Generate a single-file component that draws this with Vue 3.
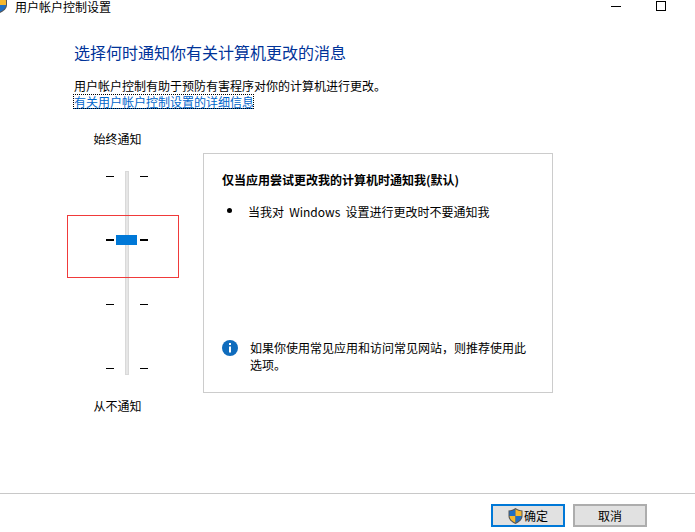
<script setup>
const tickRows = [
  { id: 1, active: false },
  { id: 2, active: true },
  { id: 3, active: false },
  { id: 4, active: false }
]
</script>

<template>
  <div class="window">
    <header class="titlebar">
      <svg class="title-shield" width="16" height="16" viewBox="0 0 16 16">
        <path d="M8 0 C10 1.5 12.5 2.2 15 2.4 V8 C15 11.5 12 14.2 8 16 C4 14.2 1 11.5 1 8 V2.4 C3.5 2.2 6 1.5 8 0Z" fill="#555" />
        <path d="M8 1.2 V8 H2 V3.2 C4 3 6.2 2.4 8 1.2Z" fill="#1f6fc4" />
        <path d="M8 1.2 C9.8 2.4 12 3 14 3.2 V8 H8Z" fill="#f5b82e" />
        <path d="M2 8 H8 V14.8 C4.6 13.2 2 11 2 8Z" fill="#f5b82e" />
        <path d="M8 8 H14 C14 11 11.4 13.2 8 14.8Z" fill="#1f6fc4" />
      </svg>
      <span class="title-text">用户帐户控制设置</span>
      <span class="win-min"></span>
      <span class="win-max"></span>
    </header>

    <main class="content">
      <h1 class="heading">选择何时通知你有关计算机更改的消息</h1>
      <p class="desc">用户帐户控制有助于预防有害程序对你的计算机进行更改。</p>
      <a class="link">有关用户帐户控制设置的详细信息</a>

      <div class="settings">
        <section class="slider">
          <div class="slider-label">始终通知</div>
          <div class="scale">
            <div class="track"></div>
            <div v-for="row in tickRows" :key="row.id" class="tick-row" :class="{ active: row.active }">
              <span class="tick"></span>
              <span v-if="row.active" class="thumb"></span>
              <span class="tick"></span>
            </div>
            <div class="marker"></div>
          </div>
          <div class="slider-label bottom">从不通知</div>
        </section>

        <section class="panel">
          <h2 class="panel-title">仅当应用尝试更改我的计算机时通知我(默认)</h2>
          <div class="bullet-row">
            <span class="dot"></span>
            <span class="bullet-text">当我对 Windows 设置进行更改时不要通知我</span>
          </div>
          <div class="note">
            <svg class="info" width="16" height="16" viewBox="0 0 16 16">
              <circle cx="8" cy="8" r="8" fill="#0f6cbd" />
              <rect x="7" y="3" width="2" height="2" fill="#fff" />
              <rect x="7" y="6.5" width="2" height="6" fill="#fff" />
            </svg>
            <p>如果你使用常见应用和访问常见网站，则推荐使用此选项。</p>
          </div>
        </section>
      </div>
    </main>

    <footer class="footer">
      <button class="btn primary">
        <svg width="15" height="16" viewBox="0 0 15 16">
          <path d="M7.5 0 C9.5 1.5 12 2.2 14.5 2.4 V8 C14.5 11.5 11.5 14.2 7.5 16 C3.5 14.2 .5 11.5 .5 8 V2.4 C3 2.2 5.5 1.5 7.5 0Z" fill="#555" />
          <path d="M7.5 1.2 V8 H1.5 V3.2 C3.5 3 5.7 2.4 7.5 1.2Z" fill="#1f6fc4" />
          <path d="M7.5 1.2 C9.3 2.4 11.5 3 13.5 3.2 V8 H7.5Z" fill="#f5b82e" />
          <path d="M1.5 8 H7.5 V14.8 C4.1 13.2 1.5 11 1.5 8Z" fill="#f5b82e" />
          <path d="M7.5 8 H13.5 C13.5 11 10.9 13.2 7.5 14.8Z" fill="#1f6fc4" />
        </svg>
        <span>确定</span>
      </button>
      <button class="btn">取消</button>
    </footer>
  </div>
</template>

<style>
html, body { margin: 0; background: #fff; }
</style>

<style scoped>
.window {
  position: relative;
  width: 695px;
  height: 532px;
  overflow: hidden;
  display: flex;
  flex-direction: column;
  background: #fff;
  color: #000;
  font: 12px/17px "Noto Sans CJK SC", "Liberation Sans", sans-serif;
}
.titlebar {
  height: 13px;
  display: flex;
  align-items: flex-start;
  flex: none;
}
.title-shield { margin: -3px 0 0 -8px; flex: none; }
.title-text { margin: -2px 0 0 7px; }
.win-min {
  width: 10px;
  height: 1px;
  margin: 6px 0 0 auto;
  background: #000;
}
.win-max {
  box-sizing: border-box;
  width: 10px;
  height: 10px;
  margin: 1px 29px 0 35px;
  border: 1px solid #000;
}
.content {
  flex: 1;
  padding-left: 74px;
}
.heading {
  margin: 28px 0 0;
  font-size: 16px;
  line-height: 22px;
  font-weight: 400;
  color: #003399;
}
.desc {
  margin: 14px 0 0;
  line-height: 17px;
}
.link {
  display: block;
  width: fit-content;
  margin: 0 0 0 -1px;
  padding: 0 0 0 1px;
  height: 15px;
  line-height: 15px;
  color: #0066cc;
  text-decoration: underline;
  outline: 1px dotted #000;
  outline-offset: -1px;
}
.settings {
  display: flex;
  margin-top: 44px;
  margin-left: -7px;
}
.slider {
  width: 112px;
  flex: none;
  margin-top: -23px;
}
.slider-label {
  text-align: center;
  margin-left: -11px;
}
.slider-label.bottom { margin-top: 22px; }
.scale {
  position: relative;
  margin-top: 24px;
  height: 204px;
  display: flex;
  flex-direction: column;
  gap: 63px;
  padding-top: 5px;
  box-sizing: border-box;
}
.track {
  position: absolute;
  left: 58px;
  top: 0;
  bottom: 0;
  width: 2px;
  background: #e6e6e6;
  border: 1px solid #d9d9d9;
}
.tick-row {
  position: relative;
  height: 1px;
  display: flex;
  justify-content: center;
  gap: 26px;
  padding-left: 8px;
}
.tick {
  width: 8px;
  height: 1px;
  background: #000;
}
.tick-row.active { gap: 2px; height: 2px; margin-top: -1px; align-items: center; }
.tick-row.active .tick { height: 2px; }
.thumb {
  width: 21px;
  height: 10px;
  margin-right: 1px;
  background: #0078d7;
  flex: none;
}
.marker {
  position: absolute;
  left: 0;
  top: 44px;
  box-sizing: border-box;
  width: 112px;
  height: 63px;
  border: 1px solid #f03a3a;
}
.panel {
  box-sizing: border-box;
  width: 350px;
  height: 240px;
  margin-left: 24px;
  border: 1px solid #cccccc;
  padding: 17px 18px 0;
  display: flex;
  flex-direction: column;
}
.panel-title {
  margin: 0;
  font-size: 12px;
  line-height: 17px;
  font-weight: 700;
}
.bullet-row {
  display: flex;
  align-items: center;
  margin-top: 15px;
  padding-left: 5px;
}
.bullet-text { word-spacing: 2.5px; }
.dot {
  width: 5px;
  height: 5px;
  margin-right: 16px;
  margin-top: -2px;
  border-radius: 50%;
  background: #000;
  flex: none;
}
.note {
  display: flex;
  margin-top: auto;
  margin-bottom: 19px;
  gap: 12px;
}
.info { flex: none; margin-top: 1px; }
.note p { margin: 0; width: 284px; }
.footer {
  box-sizing: border-box;
  flex: none;
  height: 39px;
  border-top: 1px solid #c8c8c8;
  display: flex;
  justify-content: flex-end;
  gap: 8px;
  padding: 10px 48px 0 0;
}
.btn {
  box-sizing: border-box;
  width: 74px;
  height: 23px;
  padding: 0;
  border: 2px solid #adadad;
  background: #e1e1e1;
  color: #000;
  font: inherit;
  display: flex;
  align-items: center;
  justify-content: center;
  gap: 1px;
}
.btn.primary { border-color: #0078d7; }
</style>
